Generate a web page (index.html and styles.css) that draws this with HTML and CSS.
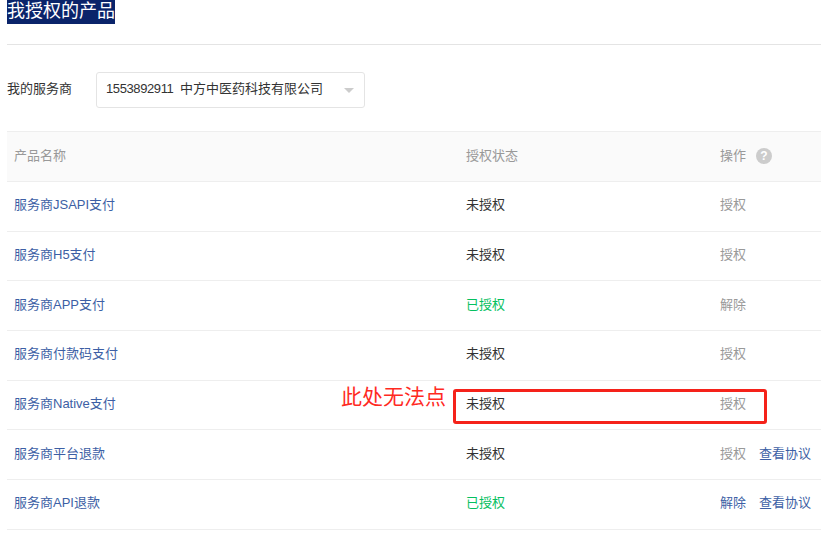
FILE: index.html
```html
<!DOCTYPE html>
<html lang="zh-CN">
<head>
<meta charset="utf-8">
<title>我授权的产品</title>
<link rel="stylesheet" href="styles.css">
</head>
<body>
<div class="page">
  <header class="head"><h1 class="title">我授权的产品</h1></header>
  <div class="filter">
    <span class="filter-label">我的服务商</span>
    <div class="select"><span class="select-text"><span class="digits">1553892911</span> 中方中医药科技有限公司</span><i class="caret"></i></div>
  </div>
  <div class="table">
    <div class="row row-head">
      <div class="c1">产品名称</div><div class="c2">授权状态</div>
      <div class="c3">操作<span class="help">?</span></div>
    </div>
    <div class="row"><div class="c1 link">服务商JSAPI支付</div><div class="c2">未授权</div><div class="c3 muted">授权</div></div>
    <div class="row"><div class="c1 link">服务商H5支付</div><div class="c2">未授权</div><div class="c3 muted">授权</div></div>
    <div class="row"><div class="c1 link">服务商APP支付</div><div class="c2 ok">已授权</div><div class="c3 muted">解除</div></div>
    <div class="row"><div class="c1 link">服务商付款码支付</div><div class="c2">未授权</div><div class="c3 muted">授权</div></div>
    <div class="row"><div class="c1 link">服务商Native支付</div><div class="c2">未授权</div><div class="c3 muted">授权</div></div>
    <div class="row"><div class="c1 link">服务商平台退款</div><div class="c2">未授权</div><div class="c3"><span class="muted">授权</span><span class="link agree">查看协议</span></div></div>
    <div class="row"><div class="c1 link">服务商API退款</div><div class="c2 ok">已授权</div><div class="c3"><span class="link">解除</span><span class="link agree">查看协议</span></div></div>
  </div>
  <div class="note">此处无法点</div>
  <div class="redbox"></div>
</div>
</body>
</html>
```
FILE: styles.css
```css
* { box-sizing: border-box; }
html, body { margin: 0; padding: 0; background: #fff; overflow: hidden; }
body { font-family: "Liberation Sans", "Noto Sans CJK SC", sans-serif; font-size: 13px; line-height: 18px; color: #333; }
.page { position: relative; width: 821px; height: 538px; padding-left: 7px; }
.head { height: 45px; border-bottom: 1px solid #e4e4e4; }
.title { display: inline-block; margin: 0; height: 24px; line-height: 23px; font-size: 18px; font-weight: 400; color: #fff; background: #0a246a; }
.filter { display: flex; align-items: center; height: 36px; margin-top: 27px; }
.filter-label { width: 89px; padding-bottom: 3px; }
.select { display: flex; align-items: center; justify-content: space-between; width: 269px; height: 36px; padding: 0 10px 0 9px; border: 1px solid #e4e4e4; border-radius: 3px; }
.select-text { padding-bottom: 3px; word-spacing: 3px; }
.digits { letter-spacing: -0.4px; }
.caret { width: 0; height: 0; border-style: solid; border-width: 5px 5px 0; border-color: #ccc transparent transparent; }
.table { margin-top: 23px; border-top: 1px solid #eee; }
.row { display: grid; grid-template-columns: 452px 254px 1fr; align-items: center; height: 49.7px; padding: 0 0 2px 7px; border-bottom: 1px solid #eee; }
.row-head { height: 50px; background: #fafafa; color: #999; }
.c3 { display: flex; align-items: center; }
.link { color: #3d5fa5; }
.muted { color: #999; }
.ok { color: #06c05f; }
.agree { margin-left: 13px; }
.help { display: flex; align-items: center; justify-content: center; width: 16px; height: 16px; margin: 1px 0 0 10px; border-radius: 50%; background: #ccc; color: #fff; font: 700 12px/16px "Liberation Sans", sans-serif; }
.note { position: absolute; left: 341px; top: 383px; font-size: 21px; line-height: 28px; color: #ff2a1f; }
.redbox { position: absolute; left: 453px; top: 389px; width: 314px; height: 35px; border: 3px solid #f5221a; border-radius: 3px; }
```
